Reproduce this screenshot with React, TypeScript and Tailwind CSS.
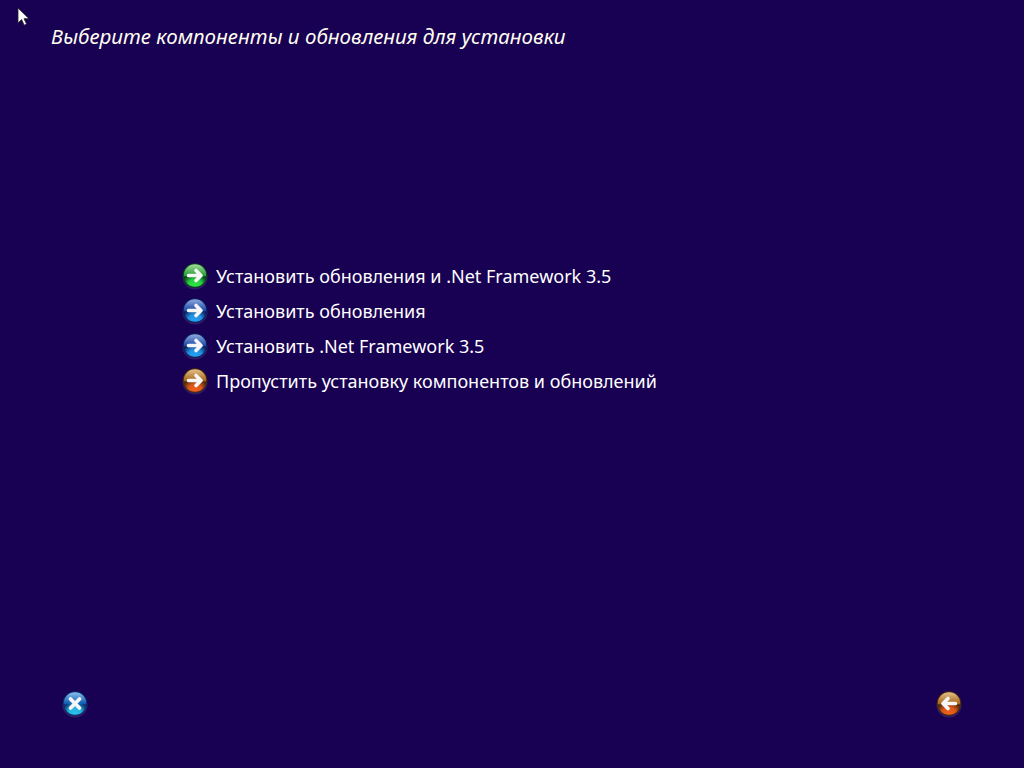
import { useId } from 'react';

type Orb = { top: string; mid: string; bottom: string; rim: string };

const green: Orb = { top: '#a4dc9c', mid: '#259c34', bottom: '#30e848', rim: '#07421a' };
const blue: Orb = { top: '#8ea8dc', mid: '#1c4aa8', bottom: '#26a4f6', rim: '#0a2060' };
const teal: Orb = { top: '#8cc0ec', mid: '#0f5cb0', bottom: '#2cc4f0', rim: '#0a2f70' };
const orange: Orb = { top: '#e4c088', mid: '#a8681c', bottom: '#f4601c', rim: '#4c2a0c' };

function OrbIcon({ color, glyph }: { color: Orb; glyph: 'right' | 'left' | 'close' }) {
  const id = useId();
  return (
    <svg width="28" height="28" viewBox="0 0 28 28" className="shrink-0">
      <defs>
        <linearGradient id={`${id}b`} x1="0" y1="0" x2="0" y2="1">
          <stop offset="0" stopColor={color.top} />
          <stop offset="0.5" stopColor={color.mid} />
          <stop offset="0.56" stopColor={color.rim} />
          <stop offset="1" stopColor={color.rim} />
        </linearGradient>
        <radialGradient id={`${id}g`} cx="0.5" cy="1" r="0.6">
          <stop offset="0" stopColor={color.bottom} />
          <stop offset="0.55" stopColor={color.bottom} stopOpacity="0.85" />
          <stop offset="1" stopColor={color.bottom} stopOpacity="0" />
        </radialGradient>
      </defs>
      <ellipse cx="14" cy="15.5" rx="12.5" ry="12" fill="#4a3a78" opacity="0.5" />
      <circle cx="14" cy="13.5" r="12.2" fill={color.rim} />
      <circle cx="14" cy="13.5" r="11.2" fill={`url(#${id}b)`} />
      <circle cx="14" cy="13.5" r="11.2" fill={`url(#${id}g)`} />
      {glyph === 'right' && (
        <path
          d="M7.5 13.5h12M15 8.5l5 5-5 5"
          fill="none"
          stroke="#f6f6f8"
          strokeWidth="3.6"
          strokeLinecap="round"
          strokeLinejoin="round"
        />
      )}
      {glyph === 'left' && (
        <path
          d="M20.5 13.5h-12M13 8.5l-5 5 5 5"
          fill="none"
          stroke="#f6f6f8"
          strokeWidth="3.6"
          strokeLinecap="round"
          strokeLinejoin="round"
        />
      )}
      {glyph === 'close' && <path d="M9.5 9l9 9M18.5 9l-9 9" stroke="#f6f6f8" strokeWidth="3.8" strokeLinecap="round" />}
    </svg>
  );
}

const options = [
  { label: 'Установить обновления и .Net Framework 3.5', color: green },
  { label: 'Установить обновления', color: blue },
  { label: 'Установить .Net Framework 3.5', color: blue },
  { label: 'Пропустить установку компонентов и обновлений', color: orange },
];

export default function App() {
  return (
    <div className="relative w-[1024px] h-[768px] overflow-hidden bg-[#180052] text-white font-['Noto_Sans',sans-serif] flex flex-col">
      <svg width="14" height="20" viewBox="0 0 14 20" className="absolute left-[17px] top-[7px]">
        <path d="M1 1v15l3.6-3.4 2.6 5.6 2.4-1.1-2.6-5.4h5z" fill="#fff" stroke="#222" strokeWidth="0.8" />
      </svg>
      <h1 className="pl-[51px] pt-[21px] text-[20.55px] leading-[30px] italic font-normal text-[#fffdf0]">
        Выберите компоненты и обновления для установки
      </h1>
      <ul className="mt-[211px] pl-[181px] flex flex-col gap-[7px]">
        {options.map((o) => (
          <li key={o.label} className="flex items-center h-[28px] gap-[7px] text-[18px] leading-[28px]">
            <OrbIcon color={o.color} glyph="right" />
            <span>{o.label}</span>
          </li>
        ))}
      </ul>
      <div className="mt-auto flex justify-between pl-[61px] pr-[61px] pb-[50px]">
        <OrbIcon color={teal} glyph="close" />
        <OrbIcon color={orange} glyph="left" />
      </div>
    </div>
  );
}
